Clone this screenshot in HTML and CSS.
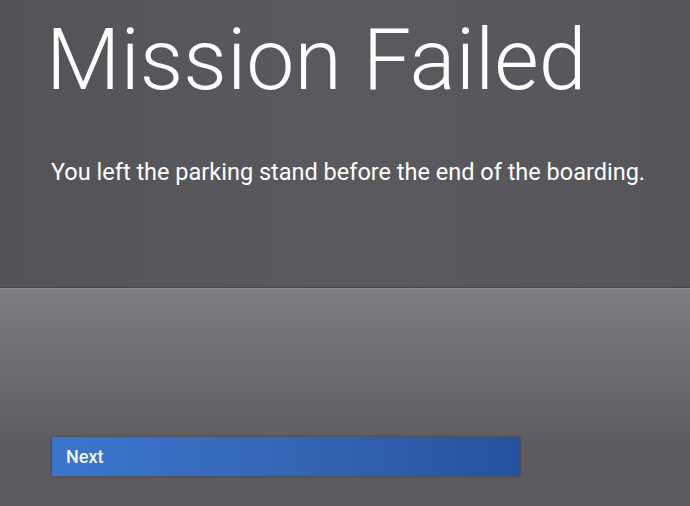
FILE: index.html
```html
<!DOCTYPE html>
<html>
<head>
<meta charset="utf-8">
<link rel="stylesheet" href="styles.css">
</head>
<body>
<div class="screen">
  <section class="top">
    <h1 class="title">Mission Failed</h1>
    <p class="message">You left the parking stand before the end of the boarding.</p>
  </section>
  <section class="bottom">
    <button class="next">Next</button>
  </section>
</div>
</body>
</html>
```
FILE: styles.css
```css
html, body {
  margin: 0;
  padding: 0;
  width: 690px;
  height: 506px;
  overflow: hidden;
  background: #56565a;
}
.screen {
  display: flex;
  flex-direction: column;
  height: 506px;
  font-family: Roboto, "Noto Sans", sans-serif;
  color: #ffffff;
}
.top {
  height: 288px;
  box-sizing: border-box;
  padding: 0 0 0 46px;
  background: linear-gradient(90deg, #545458 0%, #5a5a5e 50%, #55555a 100%);
  border-bottom: 1px solid #48484b;
}
.title {
  margin: 0;
  padding-top: 10px;
  font-weight: 300;
  font-size: 86px;
  line-height: 100px;
  letter-spacing: 0;
}
.message {
  margin: 47px 0 0 5px;
  font-size: 23.5px;
  font-weight: 400;
  line-height: 30px;
}
.bottom {
  flex: 1;
  box-sizing: border-box;
  border-top: 1px solid #8a898f;
  background: linear-gradient(180deg, #7e7d83 0%, #75757a 15%, #68686d 45%, #5a5a5f 75%, #5b5b5f 100%);
  padding: 148px 0 0 52px;
}
.next {
  display: block;
  width: 468px;
  height: 39px;
  padding: 0 0 0 14px;
  margin: 0;
  border: none;
  text-align: left;
  font-family: Roboto, "Noto Sans", sans-serif;
  font-weight: 500;
  font-size: 18px;
  color: #f4f6fb;
  background: linear-gradient(90deg, #3b76cc 0%, #3466b6 50%, #2552a0 100%);
  box-shadow: 0 0 2px rgba(40, 40, 40, 0.6);
}
```
